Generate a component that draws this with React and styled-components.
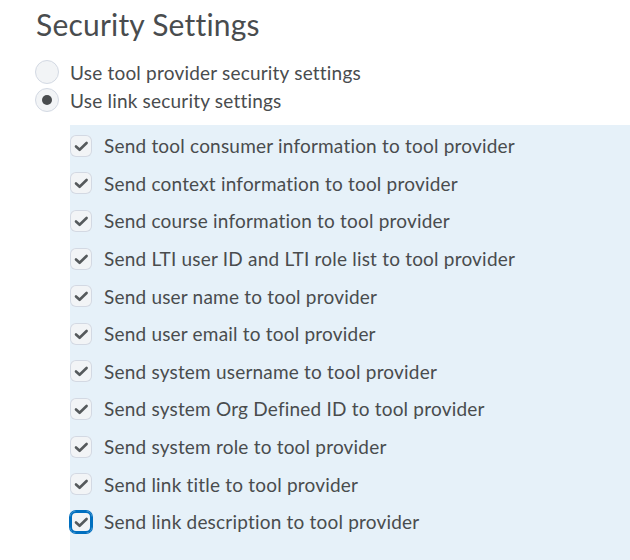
import React from "react";
import styled, { createGlobalStyle } from "styled-components";

const GlobalStyle = createGlobalStyle`
  body {
    margin: 0;
    background: #ffffff;
    font-family: Lato, "Noto Sans", sans-serif;
    color: #494c4e;
  }
`;

const Page = styled.div`
  width: 630px;
  height: 560px;
  overflow: hidden;
`;

const Title = styled.h2`
  margin: 0;
  padding: 6px 0 0 36px;
  font-size: 30px;
  font-weight: 400;
  letter-spacing: 0.2px;
  line-height: 36px;
  color: #494c4e;
`;

const RadioGroup = styled.div`
  display: flex;
  flex-direction: column;
  padding: 16px 0 0 35px;
`;

const RadioRow = styled.label`
  display: flex;
  align-items: center;
  gap: 11px;
  height: 28px;
  font-size: 19px;
  letter-spacing: 0.2px;
`;

const RadioCircle = styled.span`
  box-sizing: border-box;
  width: 24px;
  height: 24px;
  border-radius: 50%;
  border: 1px solid #d3d9e3;
  background: #f2f4f6;
  display: flex;
  align-items: center;
  justify-content: center;

  &::after {
    content: "";
    width: 10px;
    height: 10px;
    border-radius: 50%;
    background: ${(p) => (p.$checked ? "#494c4e" : "transparent")};
  }
`;

const Panel = styled.div`
  margin: 11px 0 0 70px;
  padding: 2px 0 40px 0;
  background: #e6f1f9;
`;

const CheckRow = styled.label`
  display: flex;
  align-items: center;
  gap: 12px;
  height: 37.6px;
  font-size: 19px;
  letter-spacing: 0.2px;
`;

const Box = styled.span`
  width: 22px;
  height: 22px;
  border-radius: 6px;
  background: #f2f4f6;
  box-shadow: ${(p) =>
    p.$focused
      ? "inset 0 0 0 2px #006fbf, 0 0 0 1px #006fbf"
      : "inset 0 0 0 1px #d3d9e3"};
  display: flex;

  svg {
    width: 22px;
    height: 22px;
  }
`;

const items = [
  "Send tool consumer information to tool provider",
  "Send context information to tool provider",
  "Send course information to tool provider",
  "Send LTI user ID and LTI role list to tool provider",
  "Send user name to tool provider",
  "Send user email to tool provider",
  "Send system username to tool provider",
  "Send system Org Defined ID to tool provider",
  "Send system role to tool provider",
  "Send link title to tool provider",
  "Send link description to tool provider",
];

function Check() {
  return (
    <svg viewBox="0 0 22 22">
      <path
        d="M6 11.5 L9.6 14.8 L16.6 8"
        fill="none"
        stroke="#565a5c"
        strokeWidth="2.6"
        strokeLinecap="round"
        strokeLinejoin="round"
      />
    </svg>
  );
}

export default function App() {
  return (
    <Page>
      <GlobalStyle />
      <Title>Security Settings</Title>
      <RadioGroup>
        <RadioRow>
          <RadioCircle />
          Use tool provider security settings
        </RadioRow>
        <RadioRow>
          <RadioCircle $checked />
          Use link security settings
        </RadioRow>
      </RadioGroup>
      <Panel>
        {items.map((text, i) => (
          <CheckRow key={text}>
            <Box $focused={i === items.length - 1}>
              <Check />
            </Box>
            {text}
          </CheckRow>
        ))}
      </Panel>
    </Page>
  );
}
